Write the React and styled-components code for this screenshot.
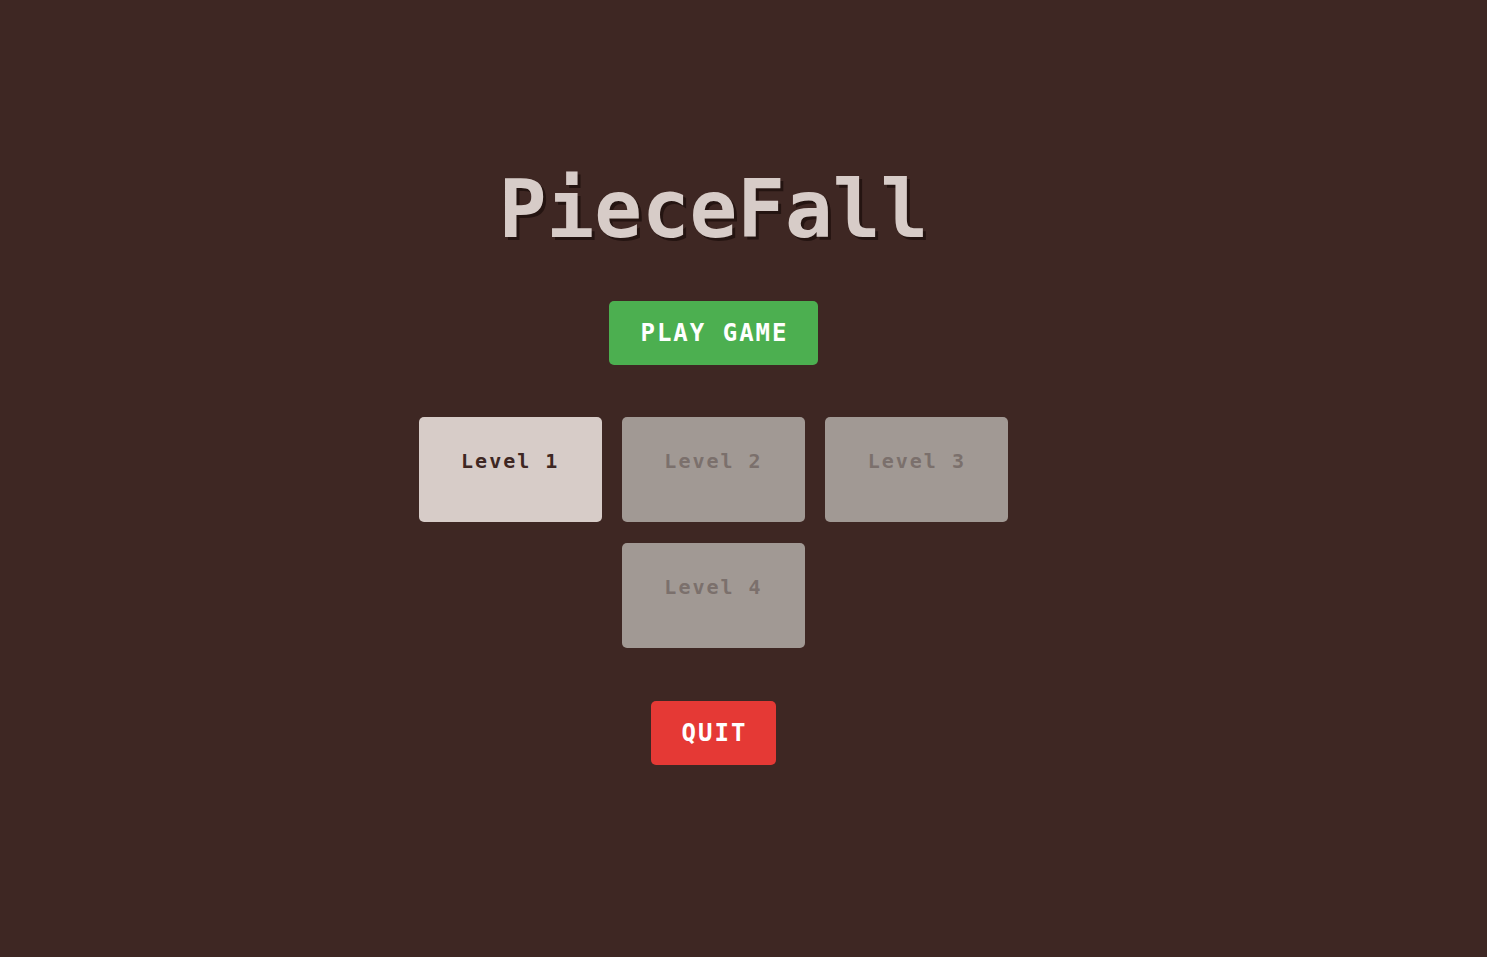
import React from "react";
import styled, { createGlobalStyle } from "styled-components";

const Global = createGlobalStyle`
  html, body { margin: 0; padding: 0; background: #3e2723; }
  body { font-family: "DejaVu Sans Mono", "Liberation Mono", monospace; }
`;

const Screen = styled.main`
  min-height: 100vh;
  display: flex;
  flex-direction: column;
  align-items: center;
  padding: 165px 60px 0 0;
  box-sizing: border-box;
  background: #3e2723;
`;

const Title = styled.h1`
  margin: 0;
  font-family: "DejaVu Sans Mono", "Liberation Mono", monospace;
  font-size: 79.3px;
  line-height: 90px;
  font-weight: 700;
  color: #d7ccc8;
  text-shadow: 3px 3px 0 #241411;
`;

const ActionButton = styled.button`
  border: none;
  border-radius: 5px;
  height: 64px;
  padding: 0 29px 0 31px;
  font-family: "DejaVu Sans Mono", "Liberation Mono", monospace;
  font-size: 24px;
  font-weight: 700;
  letter-spacing: 2px;
  color: #ffffff;
  background: ${(p) => (p.$variant === "quit" ? "#e53935" : "#4caf50")};
  cursor: pointer;
  margin-top: ${(p) => p.$top}px;
`;

const LevelGrid = styled.div`
  margin-top: 52px;
  width: 590px;
  display: flex;
  flex-wrap: wrap;
  justify-content: center;
  gap: 21px 20px;
`;

const LevelCard = styled.button`
  width: 183.3px;
  height: 105px;
  border: none;
  border-radius: 5px;
  padding: 30px 0 0 0;
  display: flex;
  justify-content: center;
  align-items: flex-start;
  font-family: "DejaVu Sans Mono", "Liberation Mono", monospace;
  font-size: 20px;
  line-height: 28px;
  font-weight: 700;
  letter-spacing: 2px;
  background: ${(p) => (p.$locked ? "#a19994" : "#d7ccc8")};
  color: ${(p) => (p.$locked ? "#7b706c" : "#3e2723")};
  cursor: ${(p) => (p.$locked ? "default" : "pointer")};
`;

const levels = [
  { n: 1, locked: false },
  { n: 2, locked: true },
  { n: 3, locked: true },
  { n: 4, locked: true },
];

export default function App() {
  return (
    <>
      <Global />
      <Screen>
        <Title>PieceFall</Title>
        <ActionButton $top={46}>PLAY GAME</ActionButton>
        <LevelGrid>
          {levels.map((l) => (
            <LevelCard key={l.n} $locked={l.locked}>
              Level {l.n}
            </LevelCard>
          ))}
        </LevelGrid>
        <ActionButton $variant="quit" $top={53}>
          QUIT
        </ActionButton>
      </Screen>
    </>
  );
}
